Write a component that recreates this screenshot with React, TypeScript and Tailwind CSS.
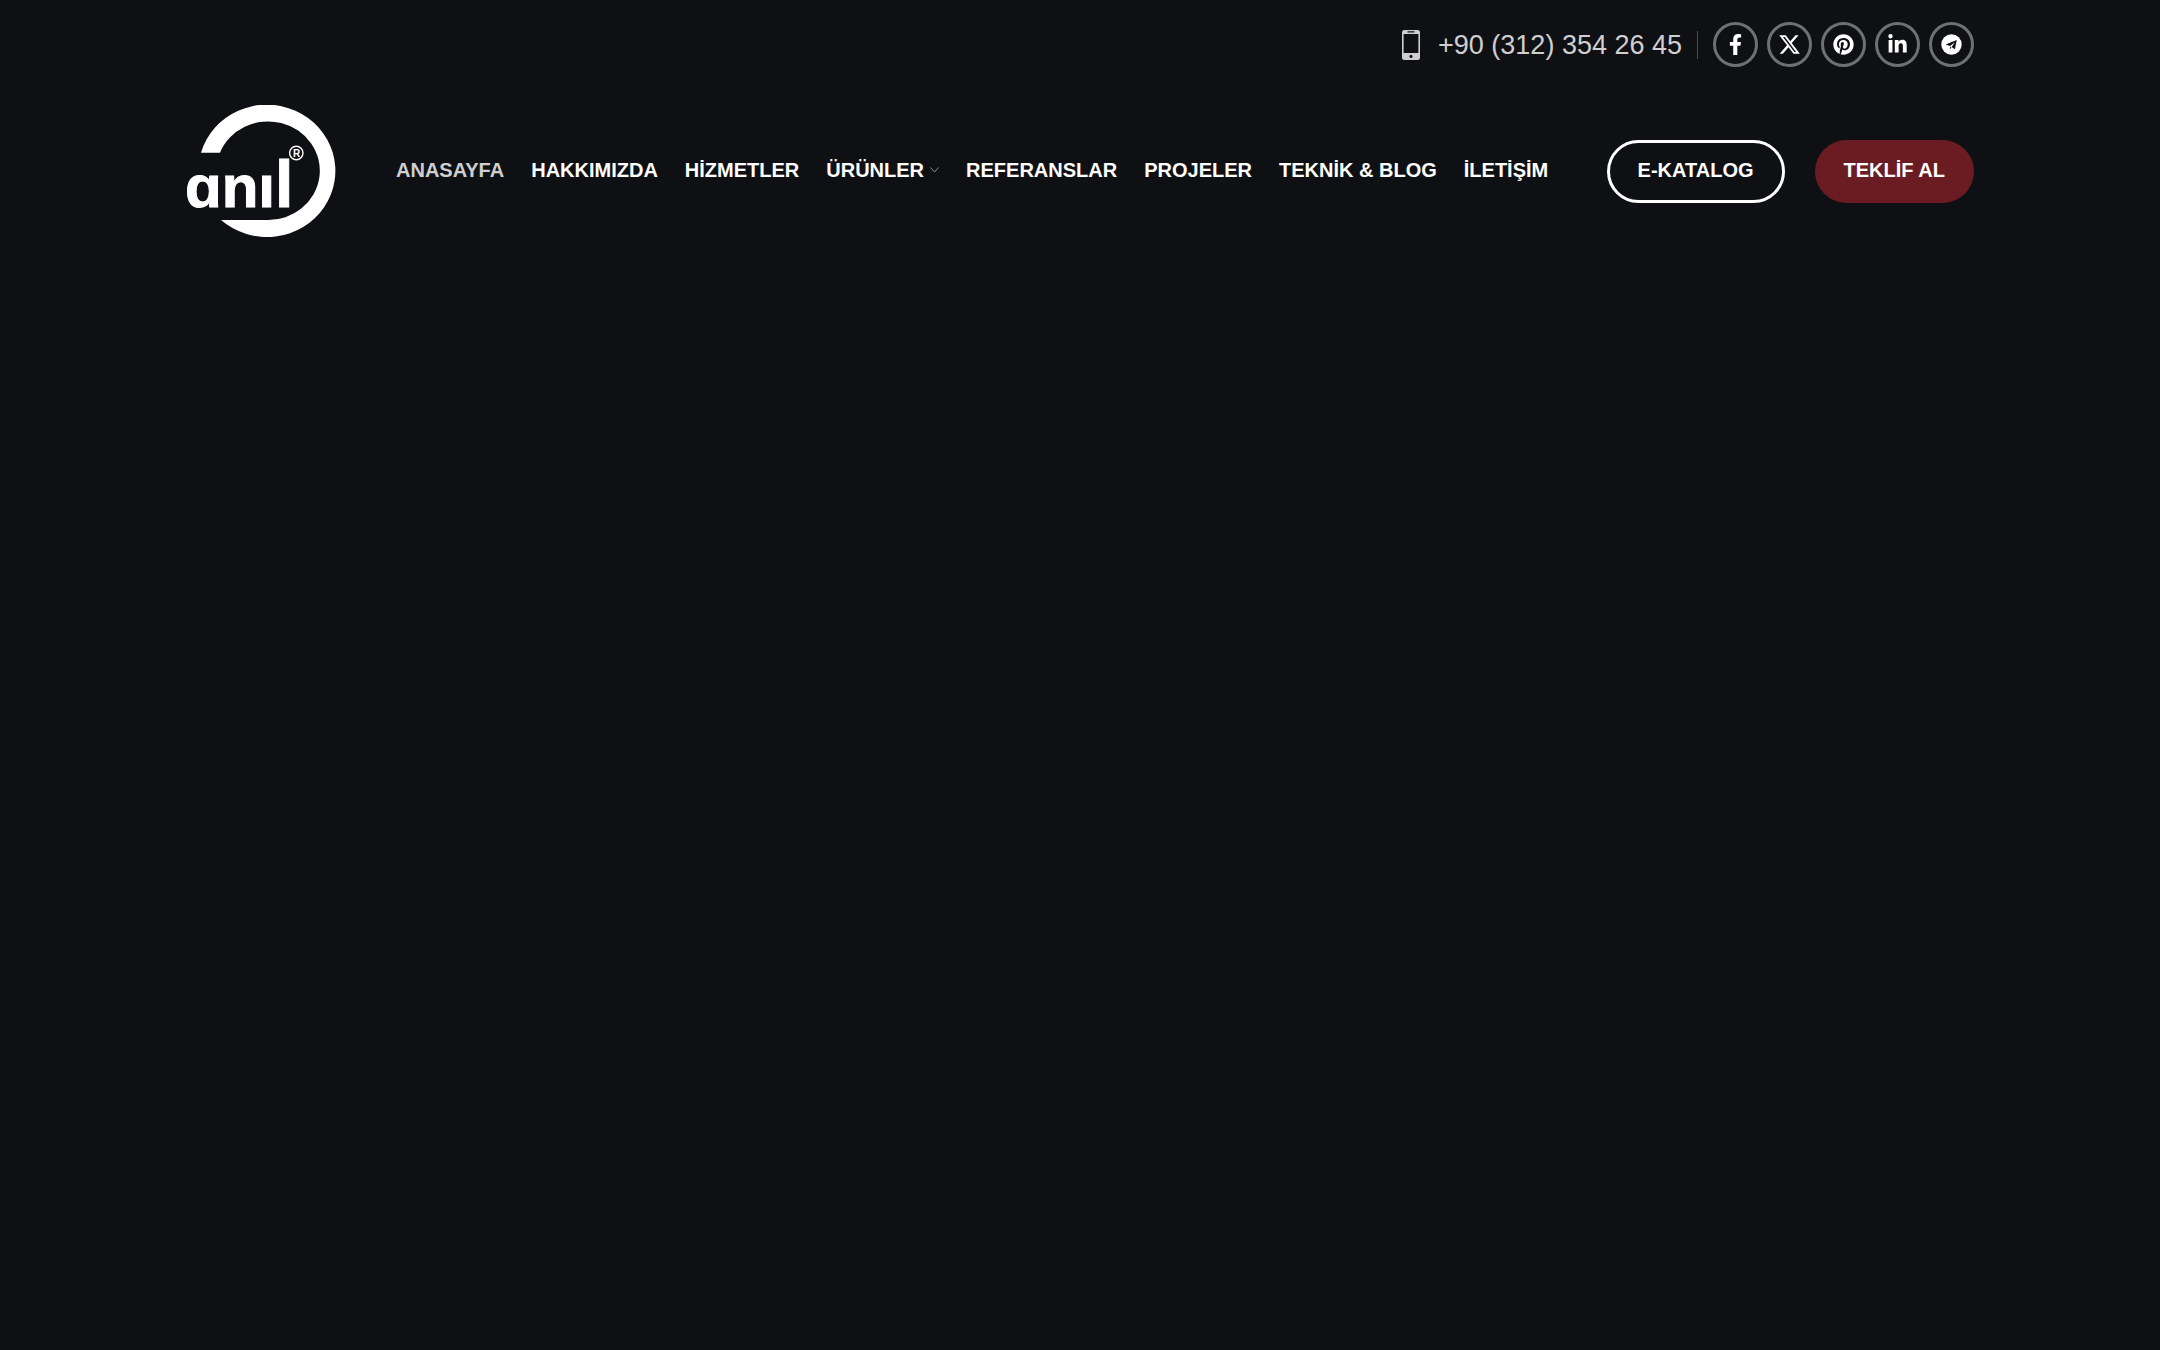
import { FaFacebookF, FaLinkedinIn, FaPinterest } from 'react-icons/fa';

interface NavItem {
  label: string;
  active?: boolean;
  hasMenu?: boolean;
}

const NAV_ITEMS: NavItem[] = [
  { label: 'ANASAYFA', active: true },
  { label: 'HAKKIMIZDA' },
  { label: 'HİZMETLER' },
  { label: 'ÜRÜNLER', hasMenu: true },
  { label: 'REFERANSLAR' },
  { label: 'PROJELER' },
  { label: 'TEKNİK & BLOG' },
  { label: 'İLETİŞİM' },
];

function XIcon({ className }: { className?: string }) {
  return (
    <svg viewBox="1 1 22 22" className={className} fill="currentColor" aria-hidden="true">
      <path d="M18.244 2.25h3.308l-7.227 8.26 8.502 11.24H16.17l-5.214-6.817L4.99 21.75H1.68l7.73-8.835L1.254 2.25H8.08l4.713 6.231zm-1.161 17.52h1.833L7.084 4.126H5.117z" />
    </svg>
  );
}

function TelegramIcon({ className }: { className?: string }) {
  return (
    <svg viewBox="0 0 21 21" className={className} aria-hidden="true">
      <circle cx="10.5" cy="10.500" r="10.200" fill="currentColor" />
      <path d="M4.600 10.600 15.800 6 13.900 15.200 10.600 12.900 14 8.200 9 12.100Z" fill="#0f1014" />
      <path d="M9 12.600 10.600 13.700 9.200 15.100Z" fill="#0f1014" />
    </svg>
  );
}

const SOCIALS = [
  { name: 'Facebook', icon: FaFacebookF },
  { name: 'X', icon: XIcon },
  { name: 'Pinterest', icon: FaPinterest },
  { name: 'Linkedin', icon: FaLinkedinIn },
  { name: 'Telegram', icon: TelegramIcon },
];

function Logo() {
  return (
    <svg viewBox="0 0 150 133" className="w-[150px] h-[133px]" fill="#fff" role="img" aria-label="anıl">
      <path d="M15 47.7A68.5 66.2 0 1 1 35 115H81A51.7 49.3 0 1 0 34 47.7Z" />
      <text x="-1" y="102" fontSize="60" fontWeight="700" stroke="#fff" strokeWidth="1">
        ɑnı<tspan fontSize="66">l</tspan>
      </text>
      <circle cx="110.3" cy="48" r="6.7" fill="none" stroke="#fff" strokeWidth="1.4" />
      <text x="110.5" y="51.5" fontSize="10" fontWeight="700" textAnchor="middle">
        R
      </text>
    </svg>
  );
}

function PhoneIcon() {
  return (
    <svg viewBox="0 0 18 30" className="w-[18px] h-[30px]" aria-hidden="true">
      <path
        fill="#cfcfd0"
        fillRule="evenodd"
        d="M2.5 0h13A2.5 2.5 0 0 1 18 2.5v25a2.5 2.5 0 0 1-2.5 2.5h-13A2.5 2.5 0 0 1 0 27.5v-25A2.5 2.5 0 0 1 2.5 0ZM1.6 4v19h14.8V4ZM5.5 1.3v1.2h7V1.3ZM9 24.8a1.6 1.6 0 1 0 0 3.2 1.6 1.6 0 0 0 0-3.2Z"
      />
    </svg>
  );
}

function TopBar() {
  return (
    <div className="flex h-[89px] items-center justify-end">
      <a href="tel:+903123542645" className="flex items-center gap-[18px] text-[27px] leading-9 text-[#cfcfd0]">
        <PhoneIcon />
        +90 (312) 354 26 45
      </a>
      <div className="mx-[15px] h-7 w-px bg-[#4b4c4f]" />
      <div className="flex gap-[9px]">
        {SOCIALS.map(({ name, icon: Icon }) => (
          <a
            key={name}
            href="#"
            aria-label={name}
            className="flex size-[45px] items-center justify-center rounded-full border-3 border-[#6f7072] text-white"
          >
            <Icon className="size-[21px]" />
          </a>
        ))}
      </div>
    </div>
  );
}

export default function App() {
  return (
    <div className="min-h-screen bg-[#0f1014] font-['Liberation_Sans',Arial,sans-serif]">
      <header className="mx-auto w-full max-w-[1788px]">
        <TopBar />

        <div className="flex items-center py-4">
          <a href="#" className="shrink-0">
            <Logo />
          </a>

          <nav className="ml-[60px] flex items-center gap-[27px] pb-1 text-[20px] leading-6 font-bold whitespace-nowrap">
            {NAV_ITEMS.map((item) => (
              <a
                key={item.label}
                href="#"
                className={item.active ? 'text-[#cfcfd0]' : 'flex items-center gap-[6px] text-white'}
              >
                {item.label}
                {item.hasMenu && (
                  <svg viewBox="0 0 9 6" className="w-[9px] h-[6px]" fill="none" aria-hidden="true">
                    <path d="M0.5 0.5 4.5 5 8.5 0.5" stroke="#8f9092" strokeWidth="1" />
                  </svg>
                )}
              </a>
            ))}
          </nav>

          {/* Call to action */}
          <div className="ml-auto flex gap-[30px] text-[20px] leading-6 font-bold whitespace-nowrap">
            <a
              href="#"
              className="flex h-[63px] items-center rounded-full border-3 border-white px-7 pb-1 text-white"
            >
              E-KATALOG
            </a>
            <a href="#" className="flex h-[63px] items-center rounded-full bg-[#6b1c23] px-[29px] pb-1 text-white">
              TEKLİF AL
            </a>
          </div>
        </div>
      </header>
    </div>
  );
}
